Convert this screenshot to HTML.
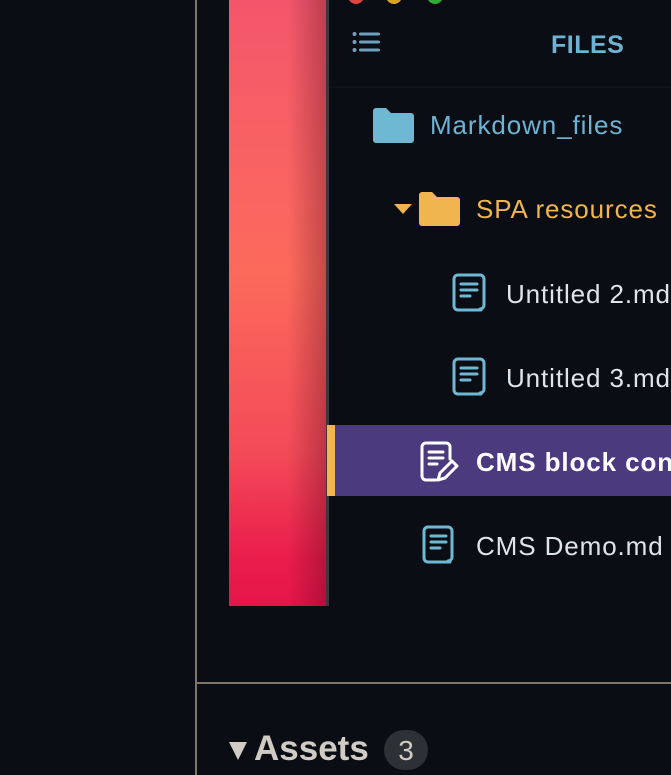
<!DOCTYPE html>
<html><head><style>
body{margin:0;width:671px;height:775px;background:#0a0d13;overflow:hidden;position:relative;font-family:"Liberation Sans",sans-serif}
.a{position:absolute}
.t{position:absolute;font-size:26px;line-height:30px;white-space:nowrap;letter-spacing:0.9px}
</style></head><body>
<div class="a" style="left:195px;top:0;width:2px;height:775px;background:#7d7566"></div>
<div class="a" style="left:197px;top:682px;width:474px;height:2px;background:#7d7566"></div>
<div class="a" style="left:229px;top:0;width:98px;height:606px;background:linear-gradient(180deg,#f3566b 0%,#fb6660 35%,#fc6a5b 45%,#f34a58 75%,#ea1d4b 92%,#e5154a 100%)"></div>
<div class="a" style="left:229px;top:0;width:98px;height:606px;background:linear-gradient(90deg,rgba(0,0,0,0) 60%,rgba(60,0,20,.3) 100%)"></div>
<div class="a" style="left:326px;top:0;width:3px;height:606px;background:#3a3a3e"></div>
<div class="a" style="left:348px;top:-12px;width:16px;height:16px;border-radius:50%;background:#e0443e"></div>
<div class="a" style="left:386px;top:-12px;width:16px;height:16px;border-radius:50%;background:#d9a428"></div>
<div class="a" style="left:427px;top:-12px;width:16px;height:16px;border-radius:50%;background:#2fac35"></div>
<svg class="a" style="left:352px;top:31px" width="30" height="24"><g fill="#6aa3c2"><circle cx="2.5" cy="3" r="2"/><circle cx="2.5" cy="11" r="2"/><circle cx="2.5" cy="19" r="2"/><rect x="7" y="1.5" width="21" height="3" rx="1.5"/><rect x="7" y="9.5" width="21" height="3" rx="1.5"/><rect x="7" y="17.5" width="21" height="3" rx="1.5"/></g></svg>
<div class="t" style="left:551px;top:30px;font-weight:bold;font-size:25px;color:#6fb3d2;letter-spacing:0.5px">FILES</div>
<div class="a" style="left:329px;top:86px;width:342px;height:2px;background:#0f1217"></div>
<svg class="a" style="left:373px;top:108px" width="41" height="35"><path d="M3 0h10l5 5h20a3 3 0 0 1 3 3v24a3 3 0 0 1-3 3H3a3 3 0 0 1-3-3V3a3 3 0 0 1 3-3z" fill="#6fb8d4"/></svg>
<div class="t" style="left:430px;top:110px;color:#6fb3d2">Markdown_files</div>
<svg class="a" style="left:394px;top:204px" width="18" height="10"><path d="M0 0h18L9 10z" fill="#f0b54e"/></svg>
<svg class="a" style="left:419px;top:192px" width="41" height="34"><path d="M3 0h10l5 5h20a3 3 0 0 1 3 3v23a3 3 0 0 1-3 3H3a3 3 0 0 1-3-3V3a3 3 0 0 1 3-3z" fill="#f0b54e"/></svg>
<div class="t" style="left:476px;top:194px;color:#f0b54e">SPA resources</div>
<svg class="a" style="left:452px;top:273px" width="36" height="40"><g fill="none" stroke="#6fb8d4" stroke-width="3" stroke-linecap="round"><path d="M29 37H6a4 4 0 0 1-4-4V6a4 4 0 0 1 4-4h22a4 4 0 0 1 4 4v26a4 4 0 0 1-4 4"/><path d="M9 11h16M9 17h16M9 23h9"/></g></svg>
<div class="t" style="left:506px;top:279px;color:#dde4ee">Untitled 2.md</div>
<svg class="a" style="left:452px;top:357px" width="36" height="40"><g fill="none" stroke="#6fb8d4" stroke-width="3" stroke-linecap="round"><path d="M29 37H6a4 4 0 0 1-4-4V6a4 4 0 0 1 4-4h22a4 4 0 0 1 4 4v26a4 4 0 0 1-4 4"/><path d="M9 11h16M9 17h16M9 23h9"/></g></svg>
<div class="t" style="left:506px;top:363px;color:#dde4ee">Untitled 3.md</div>
<div class="a" style="left:327px;top:425px;width:344px;height:71px;background:#4b3a7e"></div>
<div class="a" style="left:327px;top:425px;width:8px;height:71px;background:#f0b54e"></div>
<svg class="a" style="left:420px;top:441px" width="40" height="42"><g fill="none" stroke="#fff" stroke-width="3" stroke-linecap="round" stroke-linejoin="round"><path d="M16 39H6a4 4 0 0 1-4-4V6a4 4 0 0 1 4-4h20a4 4 0 0 1 4 4v12"/><path d="M9 11h14M9 17h14M9 23h8"/><path d="M18 39l2-7 12-12 5 5-12 12z"/></g></svg>
<div class="t" style="left:476px;top:447px;color:#fff;font-weight:bold">CMS block conf</div>
<svg class="a" style="left:422px;top:525px" width="36" height="42"><g fill="none" stroke="#6fb8d4" stroke-width="3" stroke-linecap="round"><path d="M28 37H6a4 4 0 0 1-4-4V6a4 4 0 0 1 4-4h20a4 4 0 0 1 4 4v26a4 4 0 0 1-4 4"/><path d="M9 11h15M9 17h15M9 23h9"/></g></svg>
<div class="t" style="left:476px;top:531px;color:#dde4ee">CMS Demo.md</div>
<svg class="a" style="left:229px;top:742px" width="18" height="18"><path d="M0 0h18L9 18z" fill="#d0cbc3"/></svg>
<div class="t" style="left:254px;top:729px;font-size:35px;line-height:40px;font-weight:bold;color:#d0cbc3;letter-spacing:0">Assets</div>
<div class="a" style="left:384px;top:730px;width:44px;height:40px;border-radius:20px;background:#2d3136;color:#d0cbc3;font-size:28px;line-height:42px;text-align:center">3</div>
</body></html>
